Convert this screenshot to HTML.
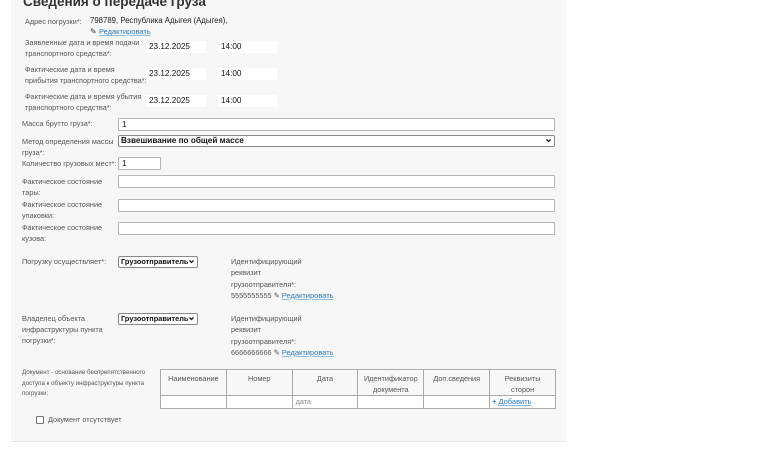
<!DOCTYPE html>
<html><head><meta charset="utf-8"><style>
*{box-sizing:border-box;margin:0;padding:0}
body{width:768px;height:455px;background:#fff;position:relative;overflow:hidden;font-family:"Liberation Sans",sans-serif;color:#333}
.p{position:absolute;left:11px;top:0;width:555px;height:442px;background:#f7f7f7;border-bottom:1px solid #e6e6e6}
.a{position:absolute;white-space:nowrap}
.l{font-size:7.3px;color:#555;line-height:11px}
.v{font-size:8px;color:#222}
.in{position:absolute;background:#fff;border:1px solid #b5b5b5;border-radius:1px;font-size:8.2px;color:#111;padding-left:3px;line-height:11px}
.dt{position:absolute;background:#fff;font-size:8.2px;color:#111;padding-left:3px;line-height:12px;height:12px}
.sel{position:absolute;background:#fff;border:1px solid #888;border-radius:2px;font-size:8.2px;color:#111;padding-left:2px;line-height:10px;white-space:nowrap;overflow:hidden}
.ch{position:absolute;right:3px;top:2px;width:5px;height:5px}
.lk{color:#2a7ab8;text-decoration:underline;text-decoration-color:#8bbbe0;font-size:7.5px}
table{position:absolute;left:160px;top:369px;border-collapse:collapse;width:396px}
td{border:1px solid #aaa;font-size:7.3px;color:#555;text-align:center;vertical-align:top;line-height:11px;width:66px}
</style></head><body>
<div class="p"></div>
<div class="a" style="left:23px;top:-6px;font-size:13.5px;font-weight:bold;color:#333">Сведения о передаче груза</div>

<div class="a l" style="left:25px;top:16px">Адрес погрузки*:</div>
<div class="a v" style="left:90px;top:16px;font-size:7.8px">798789, Республика Адыгея (Адыгея),</div>
<div class="a" style="left:90px;top:27px;font-size:8px">✎ <span class="lk">Редактировать</span></div>

<div class="a l" style="left:25px;top:37px">Заявленные дата и время подачи<br>транспортного средства*:</div>
<div class="dt" style="left:146px;top:41px;width:60px">23.12.2025</div>
<div class="dt" style="left:218px;top:41px;width:59px">14:00</div>
<div class="a l" style="left:25px;top:64px">Фактические дата и время<br>прибытия транспортного средства*:</div>
<div class="dt" style="left:146px;top:68px;width:60px">23.12.2025</div>
<div class="dt" style="left:218px;top:68px;width:59px">14:00</div>
<div class="a l" style="left:25px;top:91px">Фактические дата и время убытия<br>транспортного средства*:</div>
<div class="dt" style="left:146px;top:95px;width:60px">23.12.2025</div>
<div class="dt" style="left:218px;top:95px;width:59px">14:00</div>

<div class="a l" style="left:22px;top:118px">Масса брутто груза*:</div>
<div class="in" style="left:118px;top:118px;width:437px;height:13px">1</div>
<div class="a l" style="left:22px;top:136px">Метод определения массы<br>груза*:</div>
<div class="sel" style="left:118px;top:135px;width:437px;height:12px;font-weight:bold">Взвешивание по общей массе<svg class="ch" viewBox="0 0 10 10"><path d="M1 3L5 7L9 3" stroke="#111" stroke-width="2.5" fill="none"/></svg></div>
<div class="a l" style="left:22px;top:158px">Количество грузовых мест*:</div>
<div class="in" style="left:118px;top:157px;width:43px;height:13px">1</div>
<div class="a l" style="left:22px;top:176px">Фактическое состояние<br>тары:</div>
<div class="in" style="left:118px;top:175px;width:437px;height:13px"></div>
<div class="a l" style="left:22px;top:199px">Фактическое состояние<br>упаковки:</div>
<div class="in" style="left:118px;top:199px;width:437px;height:13px"></div>
<div class="a l" style="left:22px;top:222px">Фактическое состояние<br>кузова:</div>
<div class="in" style="left:118px;top:222px;width:437px;height:13px"></div>

<div class="a l" style="left:22px;top:256px">Погрузку осуществляет*:</div>
<div class="sel" style="left:118px;top:256px;width:80px;height:12px;font-weight:bold;font-size:7.4px">Грузоотправитель<svg class="ch" viewBox="0 0 10 10"><path d="M1 3L5 7L9 3" stroke="#111" stroke-width="2.5" fill="none"/></svg></div>
<div class="a l" style="left:231px;top:256px;line-height:11.3px">Идентифицирующий<br>реквизит<br>грузоотправителя*:<br>5555555555 ✎ <span class="lk">Редактировать</span></div>

<div class="a l" style="left:22px;top:313px">Владелец объекта<br>инфраструктуры пункта<br>погрузки*:</div>
<div class="sel" style="left:118px;top:313px;width:80px;height:12px;font-weight:bold;font-size:7.4px">Грузоотправитель<svg class="ch" viewBox="0 0 10 10"><path d="M1 3L5 7L9 3" stroke="#111" stroke-width="2.5" fill="none"/></svg></div>
<div class="a l" style="left:231px;top:313px;line-height:11.3px">Идентифицирующий<br>реквизит<br>грузоотправителя*:<br>6666666666 ✎ <span class="lk">Редактировать</span></div>

<div class="a l" style="left:22px;top:368px;font-size:6.2px;line-height:10.5px">Документ - основание беспрепятственного<br>доступа к объекту инфраструктуры пункта<br>погрузки:</div>
<table>
<tr style="height:26px"><td style="padding-top:3px">Наименование</td><td style="padding-top:3px">Номер</td><td style="padding-top:3px">Дата</td><td style="padding-top:3px">Идентификатор<br>документа</td><td style="padding-top:3px">Доп.сведения</td><td style="padding-top:3px">Реквизиты<br>сторон</td></tr>
<tr style="height:13px;background:#fff"><td></td><td></td><td style="text-align:left;padding-left:3px;color:#888">дата</td><td></td><td></td><td style="text-align:left;padding-left:2px"><b style="color:#2a7ab8">+</b> <span class="lk">Добавить</span></td></tr>
</table>
<div class="a" style="left:36px;top:416px;width:8px;height:8px;border:1px solid #777;border-radius:1px;background:#fff"></div>
<div class="a l" style="left:48px;top:414px">Документ отсутствует</div>
</body></html>
